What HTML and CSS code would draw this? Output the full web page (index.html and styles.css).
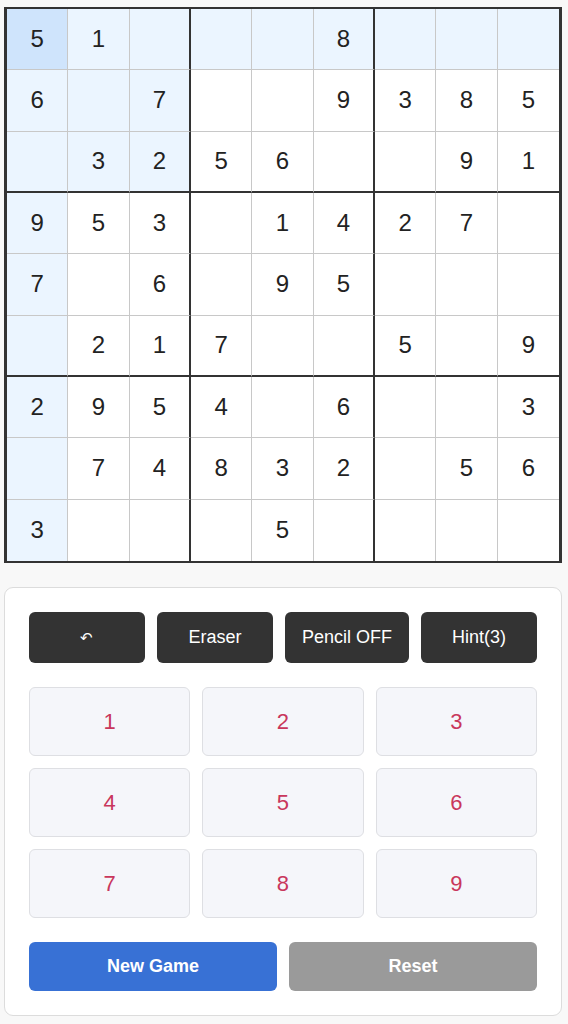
FILE: index.html
```html
<!DOCTYPE html>
<html lang="en">
  <head>
    <meta charset="UTF-8" />
    <meta name="viewport" content="width=device-width, initial-scale=1.0" />
    <title>Sudoku</title>
    <link rel="stylesheet" href="styles.css">
  </head>
  <body>
    <div class="game">
      <div class="board" id="board"></div>
      <div class="panel">
        <div class="tools">
          <button class="tool undo">&#8630;</button>
          <button class="tool">Eraser</button>
          <button class="tool">Pencil OFF</button>
          <button class="tool">Hint(3)</button>
        </div>
        <div class="pad" id="pad"></div>
        <div class="actions">
          <button class="action new">New Game</button>
          <button class="action reset">Reset</button>
        </div>
      </div>
    </div>
    <script>
      const puzzle = [
        "51___8___",
        "6_7__9385",
        "_3256__91",
        "953_1427_",
        "7_6_95___",
        "_217__5_9",
        "2954_6__3",
        "_74832_56",
        "3___5____",
      ];

      const selRow = 0;
      const selCol = 0;

      puzzle.forEach((line, r) => {
        line.split("").forEach((ch, c) => {
          const cell = document.createElement("div");
          cell.classList.add("cell");
          if (c === 2 || c === 5) cell.classList.add("thick-r");
          if (r === 2 || r === 5) cell.classList.add("thick-b");
          if (c === 8) cell.classList.add("last-c");
          if (r === 8) cell.classList.add("last-r");
          const sameBox =
            Math.floor(r / 3) === Math.floor(selRow / 3) &&
            Math.floor(c / 3) === Math.floor(selCol / 3);
          if (r === selRow && c === selCol) cell.classList.add("selected");
          else if (r === selRow || c === selCol || sameBox)
            cell.classList.add("related");
          if (ch !== "_") cell.textContent = ch;
          board.appendChild(cell);
        });
      });

      for (let n = 1; n <= 9; n++) {
        const key = document.createElement("button");
        key.classList.add("key");
        key.textContent = n;
        pad.appendChild(key);
      }
    </script>
  </body>
</html>
```

FILE: styles.css
```css
* {
  margin: 0;
  padding: 0;
  box-sizing: border-box;
}
body {
  width: 568px;
  min-height: 1024px;
  background: #f8f8f8;
  font-family: "Liberation Sans", Arial, sans-serif;
}
.game {
  padding: 7px 6px 0 4px;
}
.board {
  display: grid;
  grid-template-columns: repeat(9, 1fr);
  grid-template-rows: repeat(9, 1fr);
  width: 558px;
  height: 556px;
  border-style: solid;
  border-color: #333;
  border-width: 2px 3px;
  background: white;
}
.cell {
  display: flex;
  align-items: center;
  justify-content: center;
  border-right: 1px solid #c8c8c8;
  border-bottom: 1px solid #c8c8c8;
  font-size: 24px;
  color: #222;
}
.cell.thick-r {
  border-right: 2px solid #333;
}
.cell.thick-b {
  border-bottom: 2px solid #333;
}
.cell.last-c {
  border-right: none;
}
.cell.last-r {
  border-bottom: none;
}
.cell.related {
  background: #ebf5ff;
}
.cell.selected {
  background: #cfe4fc;
}
.panel {
  margin-top: 24px;
  padding: 24px;
  background: white;
  border: 1px solid #dcdcdc;
  border-radius: 9px;
  width: 558px;
}
button {
  font-family: inherit;
  border: none;
  cursor: pointer;
}
.tools {
  display: flex;
  gap: 12px;
}
.tool {
  flex: 1;
  height: 51px;
  padding: 0 17px;
  background: #333;
  color: white;
  font-size: 18px;
  border-radius: 6px;
  white-space: nowrap;
}
.tool.undo {
  font-size: 15px;
}
.pad {
  display: grid;
  grid-template-columns: repeat(3, 1fr);
  gap: 12px;
  margin-top: 24px;
}
.key {
  height: 69px;
  background: #f5f6fa;
  border: 1px solid #dedfe3;
  border-radius: 6px;
  color: #c9375c;
  font-size: 22px;
}
.actions {
  display: flex;
  gap: 12px;
  margin-top: 24px;
}
.action {
  flex: 1;
  height: 49px;
  color: white;
  font-size: 18px;
  font-weight: bold;
  border-radius: 6px;
}
.action.new {
  background: #3871d5;
}
.action.reset {
  background: #9a9a9a;
}
```
